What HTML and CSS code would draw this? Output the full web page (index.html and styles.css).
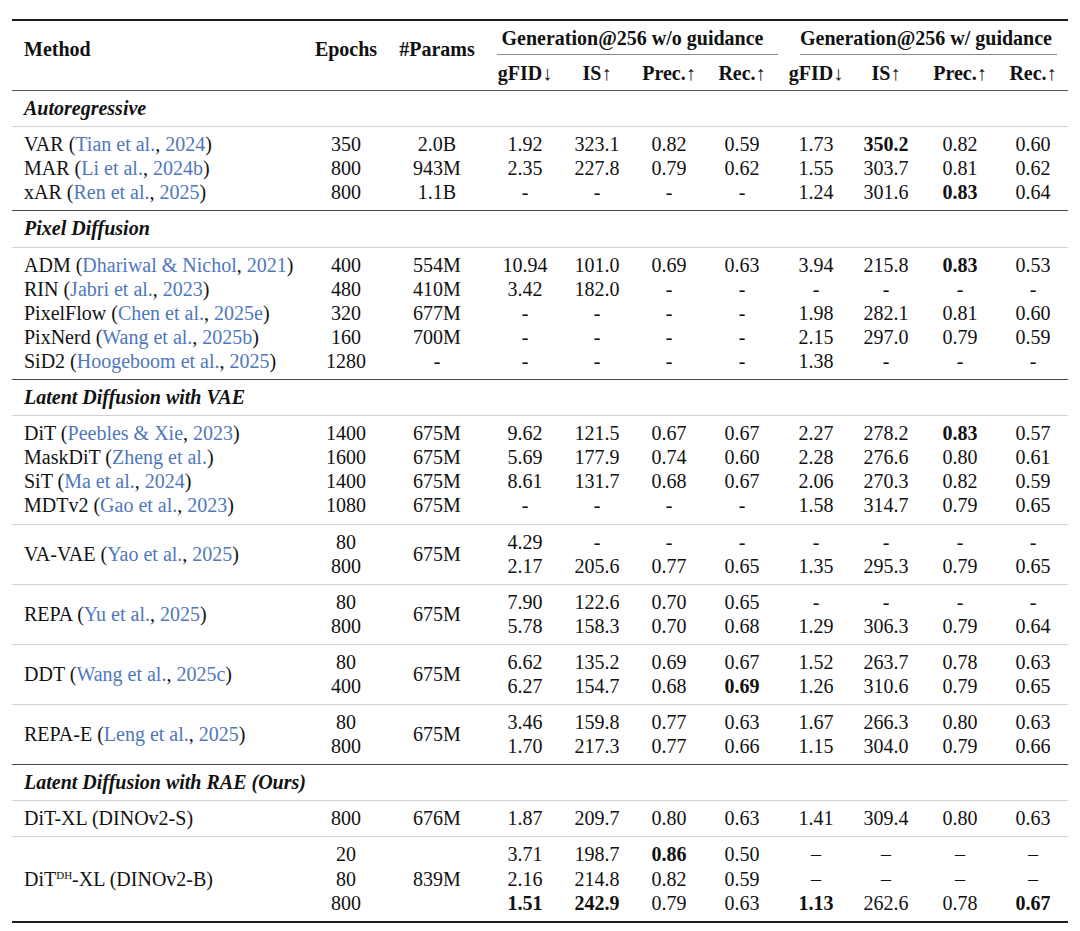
FILE: index.html
```html
<!DOCTYPE html>
<html>
<head>
<meta charset="utf-8">
<link rel="stylesheet" href="styles.css">
</head>
<body>
<table class="results">
  <colgroup>
    <col class="c-method"><col class="c-ep"><col class="c-par">
    <col class="c-a1"><col class="c-a2"><col class="c-a3"><col class="c-a4">
    <col class="c-b1"><col class="c-b2"><col class="c-b3"><col class="c-b4">
  </colgroup>
  <thead>
    <tr class="h1">
      <th rowspan="2" class="left top">Method</th>
      <th rowspan="2" class="top">Epochs</th>
      <th rowspan="2" class="top">#Params</th>
      <th colspan="4" class="grp"><div class="cmid cmid-a">Generation@256 w/o guidance</div></th>
      <th colspan="4" class="grp"><div class="cmid cmid-b">Generation@256 w/ guidance</div></th>
    </tr>
    <tr class="h2">
      <th>gFID↓</th><th>IS↑</th><th>Prec.↑</th><th>Rec.↑</th>
      <th>gFID↓</th><th>IS↑</th><th>Prec.↑</th><th>Rec.↑</th>
    </tr>
  </thead>

  <tbody class="sec first"><tr><td colspan="11">Autoregressive</td></tr></tbody>
  <tbody class="g">
    <tr><td class="left">VAR (<span class="cite">Tian et al.</span>, <span class="cite">2024</span>)</td><td>350</td><td>2.0B</td><td>1.92</td><td>323.1</td><td>0.82</td><td>0.59</td><td>1.73</td><td><b>350.2</b></td><td>0.82</td><td>0.60</td></tr>
    <tr><td class="left">MAR (<span class="cite">Li et al.</span>, <span class="cite">2024b</span>)</td><td>800</td><td>943M</td><td>2.35</td><td>227.8</td><td>0.79</td><td>0.62</td><td>1.55</td><td>303.7</td><td>0.81</td><td>0.62</td></tr>
    <tr><td class="left">xAR (<span class="cite">Ren et al.</span>, <span class="cite">2025</span>)</td><td>800</td><td>1.1B</td><td>-</td><td>-</td><td>-</td><td>-</td><td>1.24</td><td>301.6</td><td><b>0.83</b></td><td>0.64</td></tr>
  </tbody>

  <tbody class="sec"><tr><td colspan="11">Pixel Diffusion</td></tr></tbody>
  <tbody class="g">
    <tr><td class="left">ADM (<span class="cite">Dhariwal &amp; Nichol</span>, <span class="cite">2021</span>)</td><td>400</td><td>554M</td><td>10.94</td><td>101.0</td><td>0.69</td><td>0.63</td><td>3.94</td><td>215.8</td><td><b>0.83</b></td><td>0.53</td></tr>
    <tr><td class="left">RIN (<span class="cite">Jabri et al.</span>, <span class="cite">2023</span>)</td><td>480</td><td>410M</td><td>3.42</td><td>182.0</td><td>-</td><td>-</td><td>-</td><td>-</td><td>-</td><td>-</td></tr>
    <tr><td class="left">PixelFlow (<span class="cite">Chen et al.</span>, <span class="cite">2025e</span>)</td><td>320</td><td>677M</td><td>-</td><td>-</td><td>-</td><td>-</td><td>1.98</td><td>282.1</td><td>0.81</td><td>0.60</td></tr>
    <tr><td class="left">PixNerd (<span class="cite">Wang et al.</span>, <span class="cite">2025b</span>)</td><td>160</td><td>700M</td><td>-</td><td>-</td><td>-</td><td>-</td><td>2.15</td><td>297.0</td><td>0.79</td><td>0.59</td></tr>
    <tr><td class="left">SiD2 (<span class="cite">Hoogeboom et al.</span>, <span class="cite">2025</span>)</td><td>1280</td><td>-</td><td>-</td><td>-</td><td>-</td><td>-</td><td>1.38</td><td>-</td><td>-</td><td>-</td></tr>
  </tbody>

  <tbody class="sec"><tr><td colspan="11">Latent Diffusion with VAE</td></tr></tbody>
  <tbody class="g">
    <tr><td class="left">DiT (<span class="cite">Peebles &amp; Xie</span>, <span class="cite">2023</span>)</td><td>1400</td><td>675M</td><td>9.62</td><td>121.5</td><td>0.67</td><td>0.67</td><td>2.27</td><td>278.2</td><td><b>0.83</b></td><td>0.57</td></tr>
    <tr><td class="left">MaskDiT (<span class="cite">Zheng et al.</span>)</td><td>1600</td><td>675M</td><td>5.69</td><td>177.9</td><td>0.74</td><td>0.60</td><td>2.28</td><td>276.6</td><td>0.80</td><td>0.61</td></tr>
    <tr><td class="left">SiT (<span class="cite">Ma et al.</span>, <span class="cite">2024</span>)</td><td>1400</td><td>675M</td><td>8.61</td><td>131.7</td><td>0.68</td><td>0.67</td><td>2.06</td><td>270.3</td><td>0.82</td><td>0.59</td></tr>
    <tr><td class="left">MDTv2 (<span class="cite">Gao et al.</span>, <span class="cite">2023</span>)</td><td>1080</td><td>675M</td><td>-</td><td>-</td><td>-</td><td>-</td><td>1.58</td><td>314.7</td><td>0.79</td><td>0.65</td></tr>
  </tbody>
  <tbody class="g">
    <tr><td rowspan="2" class="left">VA-VAE (<span class="cite">Yao et al.</span>, <span class="cite">2025</span>)</td><td>80</td><td rowspan="2">675M</td><td>4.29</td><td>-</td><td>-</td><td>-</td><td>-</td><td>-</td><td>-</td><td>-</td></tr>
    <tr><td>800</td><td>2.17</td><td>205.6</td><td>0.77</td><td>0.65</td><td>1.35</td><td>295.3</td><td>0.79</td><td>0.65</td></tr>
  </tbody>
  <tbody class="g">
    <tr><td rowspan="2" class="left">REPA (<span class="cite">Yu et al.</span>, <span class="cite">2025</span>)</td><td>80</td><td rowspan="2">675M</td><td>7.90</td><td>122.6</td><td>0.70</td><td>0.65</td><td>-</td><td>-</td><td>-</td><td>-</td></tr>
    <tr><td>800</td><td>5.78</td><td>158.3</td><td>0.70</td><td>0.68</td><td>1.29</td><td>306.3</td><td>0.79</td><td>0.64</td></tr>
  </tbody>
  <tbody class="g">
    <tr><td rowspan="2" class="left">DDT (<span class="cite">Wang et al.</span>, <span class="cite">2025c</span>)</td><td>80</td><td rowspan="2">675M</td><td>6.62</td><td>135.2</td><td>0.69</td><td>0.67</td><td>1.52</td><td>263.7</td><td>0.78</td><td>0.63</td></tr>
    <tr><td>400</td><td>6.27</td><td>154.7</td><td>0.68</td><td><b>0.69</b></td><td>1.26</td><td>310.6</td><td>0.79</td><td>0.65</td></tr>
  </tbody>
  <tbody class="g">
    <tr><td rowspan="2" class="left">REPA-E (<span class="cite">Leng et al.</span>, <span class="cite">2025</span>)</td><td>80</td><td rowspan="2">675M</td><td>3.46</td><td>159.8</td><td>0.77</td><td>0.63</td><td>1.67</td><td>266.3</td><td>0.80</td><td>0.63</td></tr>
    <tr><td>800</td><td>1.70</td><td>217.3</td><td>0.77</td><td>0.66</td><td>1.15</td><td>304.0</td><td>0.79</td><td>0.66</td></tr>
  </tbody>

  <tbody class="sec"><tr><td colspan="11">Latent Diffusion with RAE (Ours)</td></tr></tbody>
  <tbody class="g">
    <tr><td class="left">DiT-XL (DINOv2-S)</td><td>800</td><td>676M</td><td>1.87</td><td>209.7</td><td>0.80</td><td>0.63</td><td>1.41</td><td>309.4</td><td>0.80</td><td>0.63</td></tr>
  </tbody>
  <tbody class="g last">
    <tr><td rowspan="3" class="left">DiT<sup>DH</sup>-XL (DINOv2-B)</td><td>20</td><td rowspan="3">839M</td><td>3.71</td><td>198.7</td><td><b>0.86</b></td><td>0.50</td><td>–</td><td>–</td><td>–</td><td>–</td></tr>
    <tr><td>80</td><td>2.16</td><td>214.8</td><td>0.82</td><td>0.59</td><td>–</td><td>–</td><td>–</td><td>–</td></tr>
    <tr><td>800</td><td><b>1.51</b></td><td><b>242.9</b></td><td>0.79</td><td>0.63</td><td><b>1.13</b></td><td>262.6</td><td>0.78</td><td><b>0.67</b></td></tr>
  </tbody>
</table>
</body>
</html>
```

FILE: styles.css
```css
html, body {
  margin: 0;
  padding: 0;
  background: #ffffff;
}

body {
  font-family: "Liberation Serif", "Times New Roman", serif;
  font-size: 20px;
  color: #111111;
}

.results {
  margin: 19px 0 0 12px;
  width: 1056px;
  table-layout: fixed;
  border-collapse: separate;
  border-spacing: 0;
  border-top: 2px solid #1e1e1e;
  border-bottom: 2px solid #1e1e1e;
}

.c-method { width: 298px; }
.c-ep { width: 72px; }
.c-par { width: 110px; }
.c-a1 { width: 66px; }
.c-a2 { width: 78px; }
.c-a3 { width: 66px; }
.c-a4 { width: 80px; }
.c-b1 { width: 68px; }
.c-b2 { width: 72px; }
.c-b3 { width: 76px; }
.c-b4 { width: 70px; }

th, td {
  padding: 0;
  text-align: center;
  line-height: 24.1px;
  white-space: nowrap;
  font-weight: normal;
}

th {
  font-weight: bold;
}

.left {
  text-align: left;
  padding-left: 12px;
}

thead th.top {
  vertical-align: top;
  padding-top: 16px;
}

thead .h1 th.grp {
  padding-top: 5px;
}

.cmid {
  line-height: 24px;
  padding-bottom: 4px;
  padding-right: 10px;
  border-bottom: 1px solid #8a8a8a;
}

.cmid-a {
  margin: 0 4px 0 5px;
}

.cmid-b {
  margin: 0 11px 0 18px;
}

thead .h2 th {
  padding-top: 6px;
  padding-bottom: 5px;
  border-bottom: 1px solid #5a5a5a;
}

thead th.top {
  border-bottom: 1px solid #5a5a5a;
}

tbody.sec td {
  text-align: left;
  padding: 5px 0 6px 12px;
  font-weight: bold;
  font-style: italic;
  border-top: 1px solid #4a4a4a;
}

tbody.sec.first td {
  border-top: none;
}

tbody.g > tr:first-child > td {
  border-top: 1px solid #d2d2d2;
  padding-top: 5px;
}

tbody.g > tr:last-child > td,
tbody.g td[rowspan] {
  padding-bottom: 6px;
}

tbody.g td[rowspan] {
  vertical-align: middle;
}

.cite {
  color: #5077bb;
}

b {
  font-weight: bold;
}

sup {
  font-size: 11px;
  line-height: 0;
  vertical-align: 7px;
}
```
